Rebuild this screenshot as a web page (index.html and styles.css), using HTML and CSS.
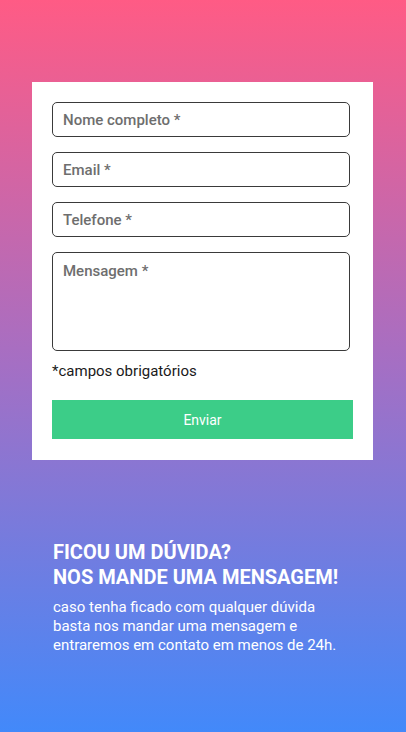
FILE: index.html
```html
<!DOCTYPE html>
<html lang="pt">
<head>
<meta charset="utf-8">
<link rel="stylesheet" href="styles.css">
</head>
<body>
<main class="page">
  <form class="card">
    <div class="field">Nome completo *</div>
    <div class="field">Email *</div>
    <div class="field">Telefone *</div>
    <div class="field area">Mensagem *</div>
    <p class="note">*campos obrigatórios</p>
    <div class="btn">Enviar</div>
  </form>
  <section class="info">
    <h2>FICOU UM DÚVIDA?<br>NOS MANDE UMA MENSAGEM!</h2>
    <p>caso tenha ficado com qualquer dúvida basta nos mandar uma mensagem e entraremos em contato em menos de 24h.</p>
  </section>
</main>
</body>
</html>
```
FILE: styles.css
```css
html, body { margin: 0; padding: 0; }
body {
  font-family: Roboto, "Liberation Sans", sans-serif;
  width: 406px;
  height: 732px;
  overflow: hidden;
  background: linear-gradient(180deg, #ff5b85 0%, #a46fc4 50%, #4289fa 100%);
}
.page {
  padding: 82px 33px 0 32px;
}
.card {
  background: #fff;
  padding: 20px 20px 21px 20px;
  display: flex;
  flex-direction: column;
  box-sizing: border-box;
}
.field {
  width: 298px;
  height: 35px;
  box-sizing: border-box;
  border: 1px solid #3a3a3a;
  border-radius: 5px;
  padding: 0 10px;
  font-size: 15px;
  font-weight: 500;
  color: #6e6e6e;
  display: flex;
  align-items: center;
  margin-bottom: 15px;
}
.field.area {
  height: 99px;
  align-items: flex-start;
  padding-top: 9px;
  margin-bottom: 0;
}
.note {
  margin: 10px 0 0 0;
  font-size: 15px;
  color: #1a1a1a;
  line-height: 20px;
}
.btn {
  margin-top: 19px;
  width: 301px;
  height: 39px;
  background: #3ccd88;
  color: #fff;
  font-size: 14px;
  display: flex;
  align-items: center;
  justify-content: center;
}
.info {
  padding: 80px 0 0 21px;
  color: #fff;
}
.info h2 {
  margin: 0;
  font-size: 20px;
  font-weight: 700;
  line-height: 25px;
}
.info p {
  margin: 8px 0 0 0;
  font-size: 15px;
  line-height: 19px;
  width: 300px;
}
```
